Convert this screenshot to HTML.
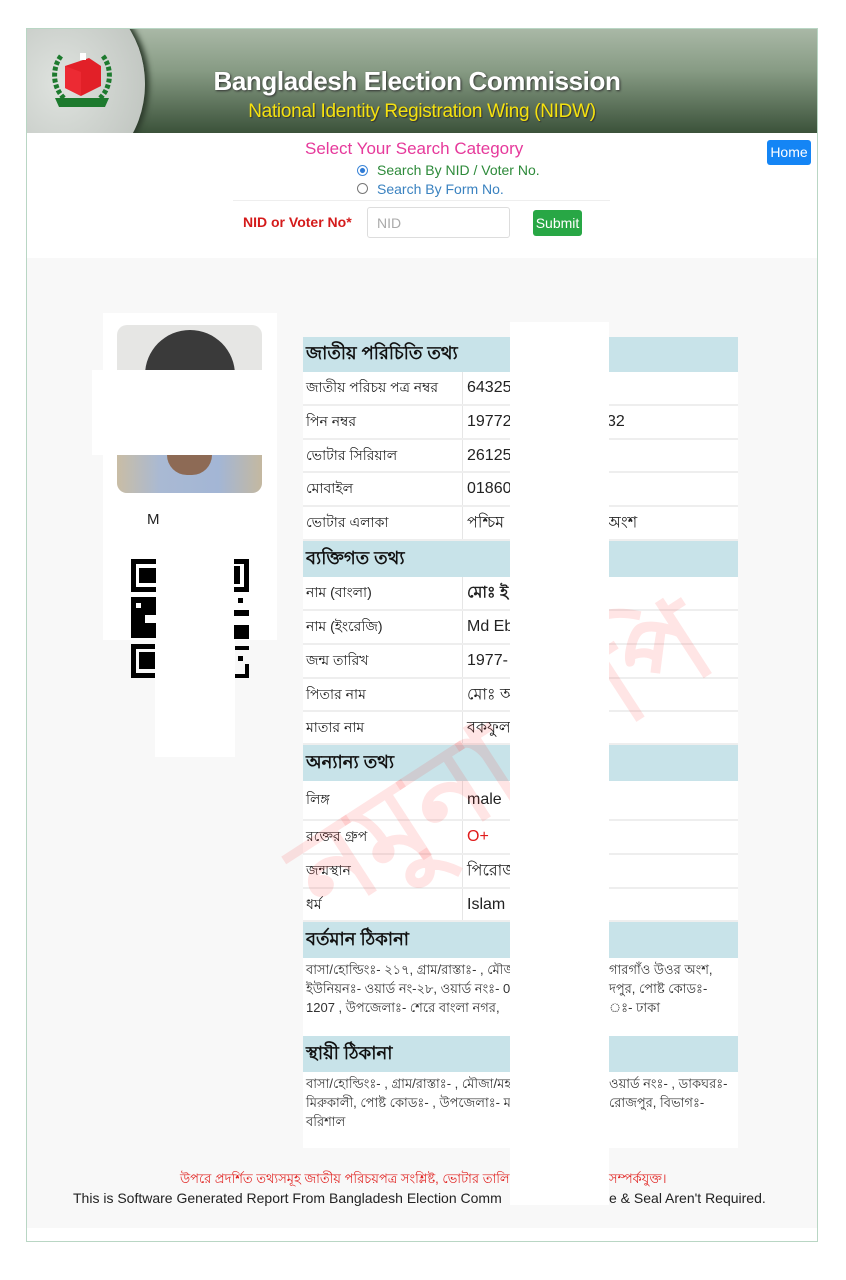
<!DOCTYPE html>
<html><head><meta charset="utf-8">
<style>
*{margin:0;padding:0;box-sizing:border-box}
body{width:846px;height:1280px;background:#fff;position:relative;overflow:hidden;font-family:"Liberation Sans",sans-serif}
.a{position:absolute}
.beng{font-family:"Liberation Sans","Noto Sans CJK SC",sans-serif}
.row{position:absolute;left:303px;width:435px;background:#fff;border-bottom:2px solid #eee;font-size:14px;color:#222}
.row .k{position:absolute;left:3px;top:50%;transform:translateY(-50%)}
.row .v{position:absolute;left:164px;top:50%;transform:translateY(-50%);font-size:16px}
.row .r{position:absolute;left:304px;top:50%;transform:translateY(-50%);font-size:16px}
.row:before{content:"";position:absolute;left:159px;top:0;bottom:0;border-left:1px solid #e6e6e6}
.sec{position:absolute;left:303px;width:435px;background:#c8e3e9;font-size:18px;font-weight:bold;color:#111;padding-left:3px;display:flex;align-items:center}
.addr{position:absolute;left:303px;width:435px;background:#fff;font-size:13px;line-height:19px;color:#333;padding:2px 3px}
.ar{position:absolute;left:609px;font-size:13px;line-height:19px;color:#333;white-space:nowrap}
</style></head><body>
<div class="a" style="left:26px;top:28px;width:792px;height:1214px;border:1px solid #b9d6c4;background:#f8f8f8"></div>
<!-- header -->
<div class="a" style="left:27px;top:29px;width:790px;height:104px;background:linear-gradient(#a9b8a6,#879b84 40%,#3b523a);overflow:hidden">
  <div class="a" style="left:-50px;top:-40px;width:168px;height:190px;border-radius:50%;background:radial-gradient(#dfe3df,#c3c8c3 70%);box-shadow:4px 0 6px #2c3a2b"></div>
  <svg class="a" style="left:20px;top:15px" width="70" height="70" viewBox="0 0 70 70">
    <path d="M14 12 C4 25 6 45 18 55" stroke="#1d7a2e" stroke-width="5" fill="none" stroke-dasharray="4 2"/>
    <path d="M56 12 C66 25 64 45 52 55" stroke="#1d7a2e" stroke-width="5" fill="none" stroke-dasharray="4 2"/>
    <polygon points="18,22 42,14 54,22 54,42 34,52 18,44" fill="#e22028"/>
    <polygon points="18,22 34,28 34,52 18,44" fill="#ec2a33"/>
    <rect x="33" y="9" width="6" height="7" fill="#fff"/>
    <path d="M8 54 L62 54 L58 63 L12 63Z" fill="#1d7a2e"/>
  </svg>
  <div class="a" style="left:160px;top:37px;width:460px;text-align:center;color:#fff;font-size:26px;font-weight:bold;letter-spacing:-0.4px;text-shadow:1px 1px 2px #333">Bangladesh Election Commission</div>
  <div class="a" style="left:170px;top:72px;width:450px;text-align:center;color:#f5e20f;font-size:19px;letter-spacing:-0.3px;text-shadow:1px 1px 1px #333">National Identity Registration Wing (NIDW)</div>
</div>
<!-- search -->
<div class="a" style="left:27px;top:133px;width:790px;height:125px;background:#fff"></div>
<div class="a" style="left:305px;top:139px;font-size:17px;color:#e6399b">Select Your Search Category</div>
<div class="a" style="left:357px;top:165px;width:11px;height:11px;border-radius:50%;border:1px solid #3d86d8;background:radial-gradient(#2f7bd6 35%,#fff 45%)"></div>
<div class="a" style="left:377px;top:162px;font-size:14px;color:#2d8a3a">Search By NID / Voter No.</div>
<div class="a" style="left:357px;top:183px;width:11px;height:11px;border-radius:50%;border:1px solid #777;background:#fff"></div>
<div class="a" style="left:377px;top:181px;font-size:14px;color:#3a82c0">Search By Form No.</div>
<div class="a" style="left:233px;top:200px;width:377px;height:1px;background:#eee"></div>
<div class="a" style="left:243px;top:214px;font-size:14px;font-weight:bold;color:#d41b1b">NID or Voter No*</div>
<div class="a" style="left:367px;top:207px;width:143px;height:31px;border:1px solid #ddd;border-radius:3px;font-size:14px;color:#aaa;padding:7px 9px">NID</div>
<div class="a" style="left:533px;top:210px;width:49px;height:26px;background:#28a745;border-radius:3px;color:#fff;font-size:14px;text-align:center;line-height:26px">Submit</div>
<div class="a" style="left:767px;top:140px;width:44px;height:25px;background:#1485f5;border-radius:3px;color:#fff;font-size:14px;text-align:center;line-height:25px">Home</div>

<!-- left panel -->
<div class="a" style="left:103px;top:313px;width:174px;height:327px;background:#fff"></div>
<div class="a" style="left:117px;top:325px;width:145px;height:168px;border-radius:10px;overflow:hidden;background:#e6e6e4">
  <div class="a" style="left:28px;top:5px;width:90px;height:80px;border-radius:45px 45px 20px 20px;background:#3a3a3a"></div>
  <div class="a" style="left:0;top:130px;width:145px;height:38px;background:linear-gradient(90deg,#c9bda5,#a9b9d3 30%,#a3b6d5 70%,#c4b8a0)"></div>
  <div class="a" style="left:50px;top:120px;width:45px;height:30px;background:#8d6a55;border-radius:0 0 20px 20px"></div>
</div>
<div class="a" style="left:92px;top:370px;width:185px;height:85px;background:#fff"></div>
<div class="a" style="left:147px;top:511px;font-size:15px;color:#222">M</div>
<!-- QR -->
<div class="a" style="left:131px;top:559px;width:25px;height:33px;border:5px solid #000;border-right:none"></div>
<div class="a" style="left:139px;top:568px;width:17px;height:15px;background:#000"></div>
<div class="a" style="left:131px;top:597px;width:25px;height:41px;background:#000"></div>
<div class="a" style="left:136px;top:603px;width:5px;height:5px;background:#fff"></div>
<div class="a" style="left:145px;top:615px;width:11px;height:8px;background:#fff"></div>
<div class="a" style="left:131px;top:644px;width:25px;height:34px;border:5px solid #000;border-right:none"></div>
<div class="a" style="left:139px;top:652px;width:17px;height:17px;background:#000"></div>
<div class="a" style="left:234px;top:559px;width:15px;height:33px;border:5px solid #000;border-left:none"></div>
<div class="a" style="left:234px;top:566px;width:6px;height:18px;background:#000"></div>
<div class="a" style="left:238px;top:598px;width:5px;height:5px;background:#000"></div>
<div class="a" style="left:234px;top:610px;width:15px;height:6px;background:#000"></div>
<div class="a" style="left:234px;top:625px;width:15px;height:14px;background:#000"></div>
<div class="a" style="left:234px;top:646px;width:15px;height:4px;background:#000"></div>
<div class="a" style="left:238px;top:656px;width:5px;height:5px;background:#000"></div>
<div class="a" style="left:234px;top:664px;width:15px;height:14px;border:4px solid #000;border-left:none;border-top:none"></div>
<div class="a" style="left:155px;top:640px;width:80px;height:117px;background:#fff"></div>

<!-- table -->
<div class="sec beng" style="top:337px;height:35px">জাতীয় পরিচিতি তথ্য</div>
<div class="row beng" style="top:372px;height:34px"><span class="k">জাতীয় পরিচয় পত্র নম্বর</span><span class="v">64325</span></div>
<div class="row beng" style="top:406px;height:34px"><span class="k">পিন নম্বর</span><span class="v">19772</span><span class="r">32</span></div>
<div class="row beng" style="top:440px;height:33px"><span class="k">ভোটার সিরিয়াল</span><span class="v">26125</span></div>
<div class="row beng" style="top:473px;height:34px"><span class="k">মোবাইল</span><span class="v">01860</span></div>
<div class="row beng" style="top:507px;height:34px"><span class="k">ভোটার এলাকা</span><span class="v">পশ্চিম</span><span class="r">অংশ</span></div>
<div class="sec beng" style="top:541px;height:36px">ব্যক্তিগত তথ্য</div>
<div class="row beng" style="top:577px;height:34px"><span class="k">নাম (বাংলা)</span><span class="v" style="font-weight:bold">মোঃ ই</span></div>
<div class="row beng" style="top:611px;height:34px"><span class="k">নাম (ইংরেজি)</span><span class="v">Md Eb</span></div>
<div class="row beng" style="top:645px;height:34px"><span class="k">জন্ম তারিখ</span><span class="v">1977-</span></div>
<div class="row beng" style="top:679px;height:33px"><span class="k">পিতার নাম</span><span class="v">মোঃ আ</span></div>
<div class="row beng" style="top:712px;height:33px"><span class="k">মাতার নাম</span><span class="v">বকফুল</span></div>
<div class="sec beng" style="top:745px;height:36px">অন্যান্য তথ্য</div>
<div class="row beng" style="top:781px;height:40px"><span class="k">লিঙ্গ</span><span class="v">male</span></div>
<div class="row beng" style="top:821px;height:34px"><span class="k">রক্তের গ্রুপ</span><span class="v" style="color:#e01b1b">O+</span></div>
<div class="row beng" style="top:855px;height:34px"><span class="k">জন্মস্থান</span><span class="v">পিরোজ</span></div>
<div class="row beng" style="top:889px;height:33px"><span class="k">ধর্ম</span><span class="v">Islam</span></div>
<div class="sec beng" style="top:922px;height:36px">বর্তমান ঠিকানা</div>
<div class="addr beng" style="top:958px;height:78px">বাসা/হোল্ডিংঃ- ২১৭, গ্রাম/রাস্তাঃ- , মৌজ<br>ইউনিয়নঃ- ওয়ার্ড নং-২৮, ওয়ার্ড নংঃ- 0.<br>1207 , উপজেলাঃ- শেরে বাংলা নগর,</div>
<div class="sec beng" style="top:1036px;height:36px">স্থায়ী ঠিকানা</div>
<div class="addr beng" style="top:1072px;height:76px">বাসা/হোল্ডিংঃ- , গ্রাম/রাস্তাঃ- , মৌজা/মহ<br>মিরুকালী, পোষ্ট কোডঃ- , উপজেলাঃ- ম<br>বরিশাল</div>

<!-- watermark -->
<div class="a beng" style="left:255px;top:810px;font-size:118px;font-weight:bold;color:rgba(255,40,40,0.12);transform:rotate(-33deg);transform-origin:left top;white-space:nowrap">নমুনা কপি</div>

<!-- white mask -->
<div class="a" style="left:510px;top:322px;width:99px;height:883px;background:#fff"></div>
<div class="ar beng" style="top:960px">গারগাঁও উওর অংশ,</div>
<div class="ar beng" style="top:979px">দপুর, পোষ্ট কোডঃ-</div>
<div class="ar beng" style="top:998px">ঃ- ঢাকা</div>
<div class="ar beng" style="top:1074px">ওয়ার্ড নংঃ- , ডাকঘরঃ-</div>
<div class="ar beng" style="top:1093px">রোজপুর, বিভাগঃ-</div>

<!-- footer -->
<div class="a beng" style="left:180px;top:1170px;font-size:13px;color:#e0201e">উপরে প্রদর্শিত তথ্যসমূহ জাতীয় পরিচয়পত্র সংশ্লিষ্ট, ভোটার তালি</div>
<div class="a beng" style="left:609px;top:1170px;font-size:13px;color:#e0201e">সম্পর্কযুক্ত।</div>
<div class="a" style="left:73px;top:1190px;font-size:14px;color:#222;white-space:nowrap">This is Software Generated Report From Bangladesh Election Comm</div>
<div class="a" style="left:609px;top:1190px;font-size:14px;color:#222;white-space:nowrap">e &amp; Seal Aren't Required.</div>
<div class="a" style="left:27px;top:1228px;width:790px;height:13px;background:#fff"></div>
</body></html>
